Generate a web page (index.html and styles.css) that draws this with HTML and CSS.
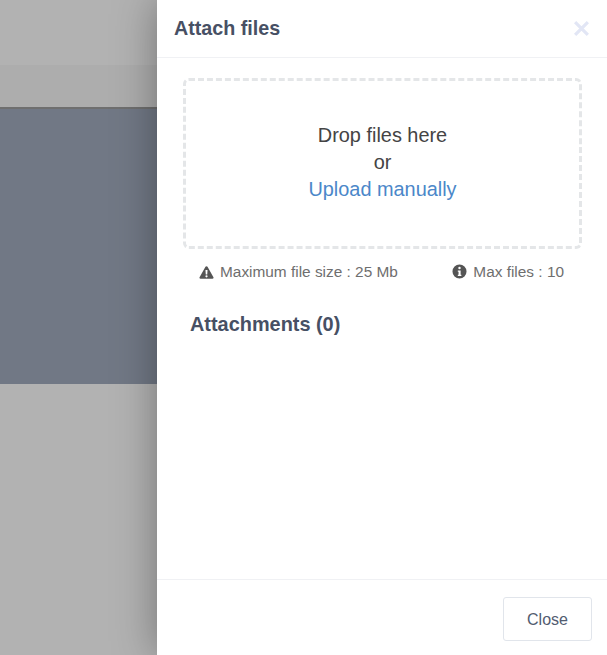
FILE: index.html
```html
<!DOCTYPE html>
<html lang="en">
<head>
    <meta charset="UTF-8">
    <meta name="viewport" content="width=device-width, initial-scale=1.0">
    <title>Attach files</title>
    <link rel="stylesheet" href="styles.css">
</head>
<body>

    <div class="page">
        <div class="page-top"></div>
        <div class="page-toolbar"></div>
        <div class="page-hero"></div>
    </div>

    <div class="backdrop"></div>

    <aside class="panel">
        <header class="panel-header">
            <h2 class="panel-title">Attach files</h2>
            <svg class="panel-close" viewBox="0 0 16 16" width="17" height="17" aria-label="Close">
                <path d="M2 2 L14 14 M14 2 L2 14" fill="none" stroke="#e2e6f5" stroke-width="3"/>
            </svg>
        </header>

        <div class="panel-body">
            <div class="dropzone">
                <span>Drop files here</span>
                <span>or</span>
                <a class="dropzone-link" href="#">Upload manually</a>
            </div>

            <div class="limits">
                <span class="limit">
                    <svg class="limit-icon" viewBox="0 0 16 16" width="15" height="15">
                        <path fill-rule="evenodd" d="M8 1.2 C8.5 1.2 8.9 1.5 9.1 1.9 L15.4 13 C15.8 13.8 15.3 14.6 14.4 14.6 L1.6 14.6 C0.7 14.6 0.2 13.8 0.6 13 L6.9 1.9 C7.1 1.5 7.5 1.2 8 1.2 Z M6.9 5.4 L7.2 10 L8.8 10 L9.1 5.4 Z M8 10.8 A1.2 1.2 0 1 0 8 13.2 A1.2 1.2 0 1 0 8 10.8 Z" fill="#555"/>
                    </svg>
                    Maximum file size : 25 Mb
                </span>
                <span class="limit">
                    <svg class="limit-icon limit-icon-info" viewBox="0 0 16 16" width="15" height="15">
                        <path fill-rule="evenodd" d="M8 0.5 A7.5 7.5 0 1 0 8 15.5 A7.5 7.5 0 1 0 8 0.5 Z M8 3 A1.3 1.3 0 1 1 8 5.6 A1.3 1.3 0 1 1 8 3 Z M6.2 6.8 L9.2 6.8 L9.2 11.4 L10 11.4 L10 12.8 L6.2 12.8 L6.2 11.4 L7 11.4 L7 8.2 L6.2 8.2 Z" fill="#555"/>
                    </svg>
                    Max files : 10
                </span>
            </div>

            <h3 class="attachments-title">Attachments (0)</h3>
        </div>

        <footer class="panel-footer">
            <button class="close-button" type="button">Close</button>
        </footer>
    </aside>

</body>
</html>
```

FILE: styles.css
```css
html, body {
    height: 100%;
}

body {
    margin: 0;
    overflow: hidden;
    font-family: "Liberation Sans", Arial, sans-serif;
    background-color: #fff;
}

.page-top {
    height: 65px;
}

.page-toolbar {
    height: 42px;
    background-color: #f8f8f8;
    border-bottom: 2px solid #a0a0a0;
}

.page-hero {
    height: 275px;
    background-color: #a3acbf;
}

.backdrop {
    position: absolute;
    top: 0;
    left: 0;
    right: 0;
    bottom: 0;
    background-color: rgba(0, 0, 0, 0.3);
}

.panel {
    position: absolute;
    top: 0;
    right: 0;
    bottom: 0;
    width: 450px;
    display: flex;
    flex-direction: column;
    background-color: #fff;
    box-shadow: 0 0 40px rgba(0, 0, 0, 0.35);
}

.panel-header {
    height: 57px;
    display: flex;
    align-items: center;
    justify-content: space-between;
    padding: 0 17px;
    border-bottom: 1px solid #f0f1f4;
}

.panel-title {
    margin: 0;
    font-size: 19.7px;
    font-weight: 700;
    color: #475064;
}

.panel-body {
    flex: 1;
    padding: 20px 25px 0 26px;
}

.dropzone {
    height: 163px;
    padding-bottom: 2px;
    display: flex;
    flex-direction: column;
    align-items: center;
    justify-content: center;
    border: 3px dashed #e4e6e8;
    border-radius: 6px;
    font-size: 19.9px;
    line-height: 27px;
    color: #444;
}

.dropzone-link {
    color: #4b87c9;
    text-decoration: none;
}

.limits {
    display: flex;
    justify-content: space-between;
    padding: 13px 18px 0 16px;
    font-size: 15.4px;
    line-height: 20px;
    color: #6e6e6e;
}

.limit {
    display: flex;
    align-items: center;
    gap: 6px;
}

.limit-icon-info {
    margin-top: -2px;
}

.attachments-title {
    margin: 29px 0 0 7px;
    font-size: 19.9px;
    line-height: 26px;
    font-weight: 700;
    color: #475064;
}

.panel-footer {
    height: 76px;
    display: flex;
    align-items: flex-start;
    justify-content: flex-end;
    padding: 17px 15px 0 0;
    box-sizing: border-box;
    border-top: 1px solid #f0f1f4;
}

.close-button {
    width: 89px;
    height: 44px;
    padding: 2px 0 0;
    background-color: #fff;
    border: 1px solid #e1e5eb;
    border-radius: 3px;
    font-family: inherit;
    font-size: 16px;
    color: #525c70;
}
```
